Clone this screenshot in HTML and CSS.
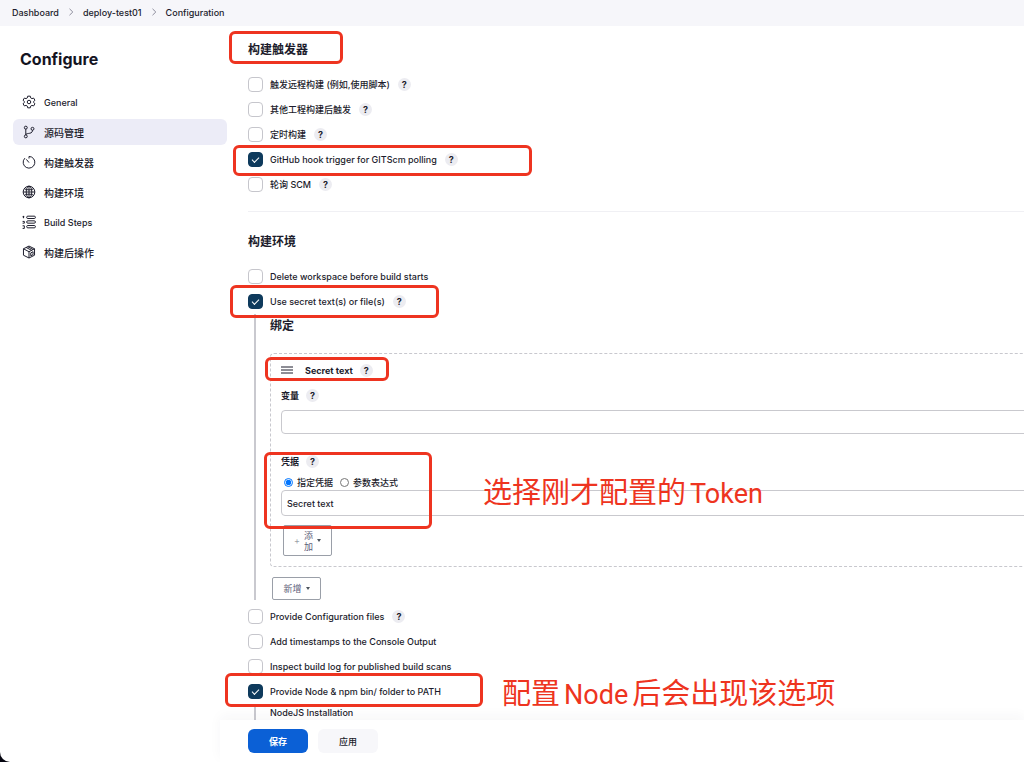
FILE: index.html
```
<!DOCTYPE html>
<html lang="zh-CN">
<head>
<meta charset="utf-8">
<title>Configure</title>
<link rel="stylesheet" href="styles.css">
</head>
<body>
<div class="app">
  <nav class="crumbs">
    <a href="#">Dashboard</a>
    <svg viewBox="0 0 6 8"><path d="M1.5 .8 4.8 4 1.5 7.2"/></svg>
    <a href="#">deploy-test01</a>
    <svg viewBox="0 0 6 8"><path d="M1.5 .8 4.8 4 1.5 7.2"/></svg>
    <a href="#">Configuration</a>
  </nav>
  <div class="body">
    <aside class="side">
      <h1>Configure</h1>
      <nav class="tasks">
        <a href="#"><svg viewBox="0 0 24 24"><path d="M9.8 2h4.4l.7 3 2.1 1.2 3-.9 2.2 3.8-2.3 2.1v1.6l2.3 2.1-2.2 3.8-3-.9-2.1 1.2-.7 3H9.800l-.7-3L7 17.800l-3 .9-2.200-3.800 2.300-2.100v-1.600L1.800 9.100 4 5.300l3 .9L9.100 5z"/><circle cx="12" cy="12" r="3"/></svg><span>General</span></a>
        <a href="#" class="current"><svg viewBox="0 0 24 24"><circle cx="6.500" cy="4.500" r="2.500"/><circle cx="6.500" cy="19.500" r="2.500"/><circle cx="18" cy="6.500" r="2.500"/><path d="M6.500 7v10M18 9c0 5-4 5-7 5.500-3 .5-4.500 1-4.500 2.500"/></svg><span class="zh">源码管理</span></a>
        <a href="#"><svg viewBox="0 0 24 24"><path d="M12 2.500a10 10 0 1 1-7.500 3.400M12 2.500V6M12 13 7.500 7.500M4.500 5.900l1 1"/></svg><span class="zh">构建触发器</span></a>
        <a href="#"><svg viewBox="0 0 24 24"><circle cx="12" cy="12" r="10"/><ellipse cx="12" cy="12" rx="4.800" ry="10"/><path d="M12 2v20M2 12h20M4 6.500c5 2.500 11 2.500 16 0M4 17.500c5-2.500 11-2.500 16 0"/></svg><span class="zh">构建环境</span></a>
        <a href="#"><svg viewBox="0 0 24 24"><path d="M1 3h3M2.500 1.500v4M1 11h3v3H1M1 18.500h3V23H1"/><rect x="8" y="2" width="15" height="4" rx="2"/><rect x="8" y="10" width="15" height="4" rx="2"/><rect x="8" y="18" width="15" height="4" rx="2"/></svg><span>Build Steps</span></a>
        <a href="#"><svg viewBox="0 0 24 24"><path d="M12 1.800 21.500 6.500v11L12 22.300 2.500 17.500v-11zM2.500 6.500 12 11.500l9.500-5M12 11.500v10.800M7 4.200l9.500 5M10 3l9 4.700M15 13.500v5l4-2v-5z"/></svg><span class="zh">构建后操作</span></a>
      </nav>
    </aside>
    <main class="main">
      <form class="form">
        <h2><span class="marked">构建触发器<i class="mark mark-title"></i></span></h2>
        <div class="row"><label><input type="checkbox">触发远程构建 (例如,使用脚本)</label><button type="button" class="help">?</button></div>
        <div class="row"><label><input type="checkbox">其他工程构建后触发</label><button type="button" class="help">?</button></div>
        <div class="row"><label><input type="checkbox">定时构建</label><button type="button" class="help">?</button></div>
        <div class="row marked"><label><input type="checkbox" checked>GitHub hook trigger for GITScm polling</label><button type="button" class="help">?</button><i class="mark mark-hook"></i></div>
        <div class="row"><label><input type="checkbox">轮询 SCM</label><button type="button" class="help">?</button></div>
        <hr>
        <h2>构建环境</h2>
        <div class="row"><label><input type="checkbox">Delete workspace before build starts</label></div>
        <div class="row marked"><label><input type="checkbox" checked>Use secret text(s) or file(s)</label><button type="button" class="help">?</button><i class="mark mark-secret"></i></div>
        <div class="nested">
          <h3>绑定</h3>
          <section class="chunk">
            <div class="chunk-head marked"><svg viewBox="0 0 12 8"><path d="M0 1h12M0 4h12M0 7h12"/></svg><b>Secret text</b><button type="button" class="help">?</button><i class="mark mark-kind"></i></div>
            <div class="field-label"><label for="variable">变量</label><button type="button" class="help">?</button></div>
            <input id="variable" class="text" type="text">
            <div class="marked credentials">
              <div class="field-label"><label for="credential">凭据</label><button type="button" class="help">?</button></div>
              <div class="radios"><label><input type="radio" name="mode" checked>指定凭据</label><label><input type="radio" name="mode">参数表达式</label></div>
              <select id="credential" class="text"><option>Secret text</option></select>
              <i class="mark mark-credential"></i>
              <p class="note note-token">选择刚才配置的<span>Token</span></p>
            </div>
            <button type="button" class="outline add"><span class="plus">+</span><span class="stack">添<br>加</span><span class="caret"></span></button>
          </section>
          <button type="button" class="outline new">新增<span class="caret"></span></button>
        </div>
        <div class="row"><label><input type="checkbox">Provide Configuration files</label><button type="button" class="help">?</button></div>
        <div class="row"><label><input type="checkbox">Add timestamps to the Console Output</label></div>
        <div class="row"><label><input type="checkbox">Inspect build log for published build scans</label></div>
        <div class="row marked"><label><input type="checkbox" checked>Provide Node &amp; npm bin/ folder to PATH</label><i class="mark mark-node"></i><p class="note note-node">配置<span>Node</span>后会出现该选项</p></div>
        <div class="nested tail">NodeJS Installation</div>
      </form>
      <footer class="actions"><button type="button" class="save">保存</button><button type="button" class="apply">应用</button></footer>
    </main>
  </div>
</div>
</body>
</html>
```
FILE: styles.css
```
* { box-sizing: border-box; }
html { background: #050510; }
body {
  margin: 0;
  font-family: Inter, "Noto Sans CJK SC", sans-serif;
  font-size: 9px;
  font-weight: 500;
  color: #1c1c2c;
}
h1, h2, h3, p { margin: 0; }
a { color: inherit; text-decoration: none; }
button, input, select { font: inherit; color: inherit; margin: 0; }
svg { fill: none; stroke: currentColor; flex: none; }

.app {
  height: 100vh;
  display: flex;
  flex-direction: column;
  overflow: hidden;
  background: #fff;
  border-bottom-left-radius: 10px;
}
.crumbs {
  flex: none;
  height: 26px;
  padding: 0 12px 2px;
  display: flex;
  align-items: center;
  gap: 9px;
  background: #f6f6fa;
}
.crumbs svg { width: 6px; height: 8px; stroke: #8c8c9c; }
.body { flex: 1; min-height: 0; display: flex; }

.side { flex: none; width: 227px; padding: 21px 0 0 13px; }
.side h1 { padding-left: 7px; font-size: 16px; line-height: 24px; font-weight: 700; color: #14141f; }
.tasks { margin-top: 18px; display: flex; flex-direction: column; gap: 4px; }
.tasks a { height: 26px; padding-left: 9px; display: flex; align-items: center; gap: 8px; border-radius: 6px; }
.tasks svg { width: 14px; height: 14px; stroke-width: 1.7; }
.tasks .zh { font-size: 10px; }
.tasks .current { background: #ececf7; }

.main { flex: 1; min-width: 0; margin-left: -7px; display: flex; flex-direction: column; }
.form { flex: 1; min-height: 0; overflow: hidden; padding: 12px 0 0 28px; }
h2 { font-size: 12px; line-height: 24px; font-weight: 700; margin-bottom: 10px; }
.marked { position: relative; }
.row { height: 25px; display: flex; align-items: center; gap: 8px; }
.row label { display: flex; align-items: center; gap: 7px; }
.row input {
  appearance: none;
  width: 15px;
  height: 15px;
  border: 1px solid #c6c6cc;
  border-radius: 4px;
  background: #fff;
  display: grid;
  place-items: center;
}
.row input:checked { background: #0e3a5c; border-color: #0e3a5c; }
.row input:checked::before {
  content: "";
  width: 6px;
  height: 3px;
  margin-bottom: 2px;
  border: solid #fff;
  border-width: 0 0 1px 1px;
  transform: rotate(-45deg);
}
.help {
  width: 13px;
  height: 13px;
  padding: 0;
  border: 0;
  border-radius: 50%;
  background: #ececf1;
  font-size: 9px;
  line-height: 13px;
  font-weight: 700;
  text-align: center;
}
hr { height: 1px; margin: 14px 0 18px; border: 0; background: #f0f0f4; }

.nested { margin: 0 0 4px 6px; padding-left: 14px; border-left: 2px solid #c9c9cf; }
h3 { font-size: 12px; line-height: 22px; font-weight: 700; padding-top: 1px; margin-bottom: 16px; }
.chunk {
  margin-right: -12px;
  padding: 4px 0 10px 10px;
  border: 1px dashed #c8c8ce;
  border-radius: 4px;
}
.chunk-head { height: 24px; display: flex; align-items: center; gap: 7px; }
.chunk-head svg { width: 12px; height: 8px; margin-right: 5px; }
.chunk-head b { font-size: 9px; font-weight: 700; }
.field-label { height: 20px; margin: 3px 0; display: flex; align-items: center; gap: 7px; font-weight: 700; }
.text {
  display: block;
  width: 100%;
  height: 24px;
  padding: 0 5px;
  border: 1px solid #c9c9ce;
  border-radius: 4px;
  background: #fff;
  appearance: none;
}
#variable { margin-top: 5px; }
#credential { height: 26px; }
.credentials { margin-top: 17px; }
.radios { height: 16px; padding-left: 3px; display: flex; align-items: center; gap: 7px; }
.radios label { display: flex; align-items: center; gap: 4px; }
.radios input { width: 9px; height: 9px; }
.outline {
  display: flex;
  align-items: center;
  justify-content: center;
  width: 49px;
  padding: 0;
  gap: 4px;
  border: 1px solid #9a9fa8;
  border-radius: 2px;
  background: transparent;
  color: #5d5d78;
  font-weight: 400;
}
.add { height: 31px; margin: 9px 0 0 2px; line-height: 11px; }
.add .plus { color: #9a9fa8; }
.new { height: 23px; margin: 10px 0 0 2px; }
.caret { border: 2px solid transparent; border-top: 3px solid #4d545d; border-bottom: 0; }
.tail { line-height: 18px; }

.actions {
  flex: none;
  height: 42px;
  padding: 9px 0 9px 28px;
  display: flex;
  gap: 10px;
  background: #fff;
  box-shadow: 0 -4px 12px rgba(40, 40, 80, 0.04);
}
.actions button { width: 60px; padding: 0; border: 0; border-radius: 6px; font-weight: 700; }
.save { background: #0b60d6; color: #fff; }
.actions .apply { background: #f7f7fa; font-weight: 500; }

.mark {
  position: absolute;
  border: 3px solid #ee3420;
  border-radius: 6px;
  pointer-events: none;
}
.mark-title { left: -19px; top: -11px; width: 114px; height: 33px; }
.mark-hook { left: -15px; top: -2px; width: 299px; height: 31px; }
.mark-secret { left: -18px; top: -4px; width: 209px; height: 33px; }
.mark-kind { left: -16px; top: -1px; width: 124px; height: 24px; }
.mark-credential { left: -17px; top: 1px; width: 168px; height: 77px; }
.mark-node { left: -23px; top: -6px; width: 258px; height: 34px; }
.note {
  position: absolute;
  white-space: nowrap;
  font-size: 29px;
  line-height: 36px;
  font-weight: 400;
  font-family: Roboto, "Noto Sans CJK SC", sans-serif;
  color: #ee3420;
}
.note span { font-size: 27px; padding: 0 4px; }
.note-token { left: 202px; top: 24px; }
.note-node { left: 254px; top: -3px; }
```
